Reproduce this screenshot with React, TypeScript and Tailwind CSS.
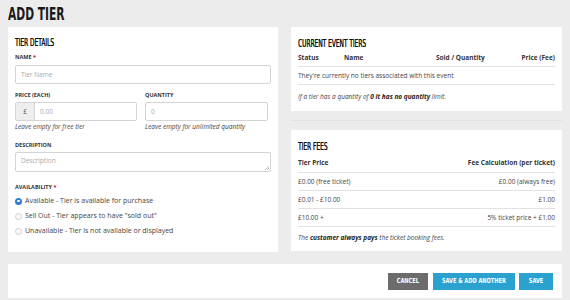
import React from 'react';

const body = "font-['Open_Sans','DejaVu_Sans',sans-serif]";
const cond = "font-['DejaVu_Sans_Condensed','DejaVu_Sans',sans-serif]";

function Heading({ children }: { children: React.ReactNode }) {
  return (
    <div className="h-[14px] leading-[14px] whitespace-nowrap">
      <span className={`${cond} inline-block origin-left scale-x-[0.62] text-[10.5px] text-[#111] [text-shadow:0.3px_0_0_#111]`}>{children}</span>
    </div>
  );
}

function Label({ children, required }: { children: React.ReactNode; required?: boolean }) {
  return (
    <div className={`${body} h-[8px] leading-[8px] text-[5.5px] font-bold uppercase text-[#333]`}>
      {children}
      {required && <span className="text-[#d0021b]"> *</span>}
    </div>
  );
}

function Radio({ checked, children }: { checked?: boolean; children: React.ReactNode }) {
  return (
    <div className="flex items-center h-[12px] gap-[3px]">
      {checked ? (
        <span className="w-[7px] h-[7px] rounded-full bg-[#2d7fd6] flex items-center justify-center">
          <span className="w-[2.5px] h-[2.5px] rounded-full bg-white" />
        </span>
      ) : (
        <span className="w-[7px] h-[7px] rounded-full border border-[#cfcfcf] bg-[#fafafa]" />
      )}
      <span className="text-[7px] text-[#444]">{children}</span>
    </div>
  );
}

export default function App() {
  return (
    <div className={`${body} w-[570px] h-[300px] bg-[#ececec] px-2 overflow-hidden`}>
      {/* page title */}
      <div className="h-[27px] pt-[3px] leading-[22px] whitespace-nowrap">
        <span className={`${cond} inline-block origin-left scale-x-[0.66] text-[18px] font-bold text-[#1a1a1a]`}>ADD TIER</span>
      </div>

      <div className="grid grid-cols-[270px_271px] gap-[13px]">
        {/* left: tier details */}
        <div className="bg-white h-[225px] px-[7px] pt-[6px]">
          <Heading>TIER DETAILS</Heading>
          <div className="mt-[6px]">
            <Label required>Name</Label>
          </div>
          <div className="mt-[4px] h-[19px] border border-[#d4d4d4] rounded-[2px] flex items-center px-[5px] text-[6.5px] text-[#aaa]">
            Tier Name
          </div>

          <div className="mt-[7px] grid grid-cols-[122px_123px] gap-[8px]">
            <div>
              <Label>Price (each)</Label>
              <div className="mt-[3px] h-[19px] border border-[#d4d4d4] rounded-[2px] flex text-[6.5px]">
                <div className="w-[19px] bg-[#eeeeee] border-r border-[#d4d4d4] flex items-center justify-center text-[#555]">£</div>
                <div className="flex items-center px-[5px] text-[#aaa]">0.00</div>
              </div>
              <div className="mt-[2px] h-[8px] leading-[8px] text-[6.5px] italic text-[#444]">Leave empty for free tier</div>
            </div>
            <div>
              <Label>Quantity</Label>
              <div className="mt-[3px] h-[19px] border border-[#d4d4d4] rounded-[2px] flex items-center px-[5px] text-[6.5px] text-[#aaa]">
                0
              </div>
              <div className="mt-[2px] h-[8px] leading-[8px] text-[6.5px] italic text-[#444] whitespace-nowrap">Leave empty for unlimited quantity</div>
            </div>
          </div>

          <div className="mt-[10px]">
            <Label>Description</Label>
          </div>
          <div className="relative mt-[3px] h-[20px] border border-[#d4d4d4] rounded-[2px] px-[5px] pt-[4px] text-[6.5px] text-[#aaa] leading-[8px]">
            Description
            <svg className="absolute right-[1px] bottom-[1px]" width="4" height="4" viewBox="0 0 4 4">
              <path d="M4 0 L0 4 M4 2 L2 4" stroke="#999" strokeWidth="0.6" />
            </svg>
          </div>

          <div className="mt-[11px]">
            <Label required>Availability</Label>
          </div>
          <div className="mt-[4px] flex flex-col gap-[3px]">
            <Radio checked>Available - Tier is available for purchase</Radio>
            <Radio>Sell Out - Tier appears to have "sold out"</Radio>
            <Radio>Unavailable - Tier is not available or displayed</Radio>
          </div>
        </div>

        {/* right column */}
        <div className="flex flex-col">
          <div className="bg-white h-[84px] px-[7px] pt-[7px]">
            <Heading>CURRENT EVENT TIERS</Heading>
            <div className="mt-[2px] grid grid-cols-[46px_92px_1fr_auto] h-[17px] items-center text-[6.5px] font-bold text-[#333] border-b border-[#e2e2e2]">
              <span>Status</span>
              <span>Name</span>
              <span>Sold / Quantity</span>
              <span>Price (Fee)</span>
            </div>
            <div className="h-[18px] flex items-center text-[6.5px] text-[#444] border-b border-[#e2e2e2]">
              They're currently no tiers associated with this event
            </div>
            <div className="h-[23px] flex items-center text-[6.5px] italic text-[#444]">
              <span>
                If a tier has a quantity of <b className="text-[#222]">0 it has no quantity</b> limit.
              </span>
            </div>
          </div>

          <div className="mt-[9px] mb-[9px] h-px bg-[#e2e2e2]" />

          <div className="bg-white h-[121px] px-[7px] pt-[7px]">
            <Heading>TIER FEES</Heading>
            <div className="mt-[2px] flex justify-between h-[20px] items-center text-[6.5px] font-bold text-[#333] border-b border-[#e2e2e2]">
              <span>Tier Price</span>
              <span>Fee Calculation (per ticket)</span>
            </div>
            {[
              ['£0.00 (free ticket)', '£0.00 (always free)'],
              ['£0.01 - £10.00', '£1.00'],
              ['£10.00 +', '5% ticket price + £1.00'],
            ].map(([a, b]) => (
              <div key={a} className="flex justify-between h-[18px] items-center text-[6.5px] text-[#444] border-b border-[#e2e2e2]">
                <span>{a}</span>
                <span>{b}</span>
              </div>
            ))}
            <div className="h-[22px] flex items-center text-[6.5px] italic text-[#444]">
              <span>
                The <b className="text-[#222]">customer always pays</b> the ticket booking fees.
              </span>
            </div>
          </div>
        </div>
      </div>

      {/* footer actions */}
      <div className="mt-[12px] bg-white h-[34px] w-[554px] flex items-center justify-end gap-[4px] pr-[9px]">
        <button className="w-[40px] h-[17px] bg-[#6c6c6c] text-white flex items-center justify-center">
          <span className={`${cond} inline-block scale-x-[0.8] text-[7px] font-bold`}>CANCEL</span>
        </button>
        <button className="ml-[1px] w-[82px] h-[17px] bg-[#2ba1cf] text-white flex items-center justify-center">
          <span className={`${cond} inline-block scale-x-[0.8] text-[7px] font-bold whitespace-nowrap`}>SAVE &amp; ADD ANOTHER</span>
        </button>
        <button className="w-[34px] h-[17px] bg-[#2ba1cf] text-white flex items-center justify-center">
          <span className={`${cond} inline-block scale-x-[0.8] text-[7px] font-bold`}>SAVE</span>
        </button>
      </div>
    </div>
  );
}
